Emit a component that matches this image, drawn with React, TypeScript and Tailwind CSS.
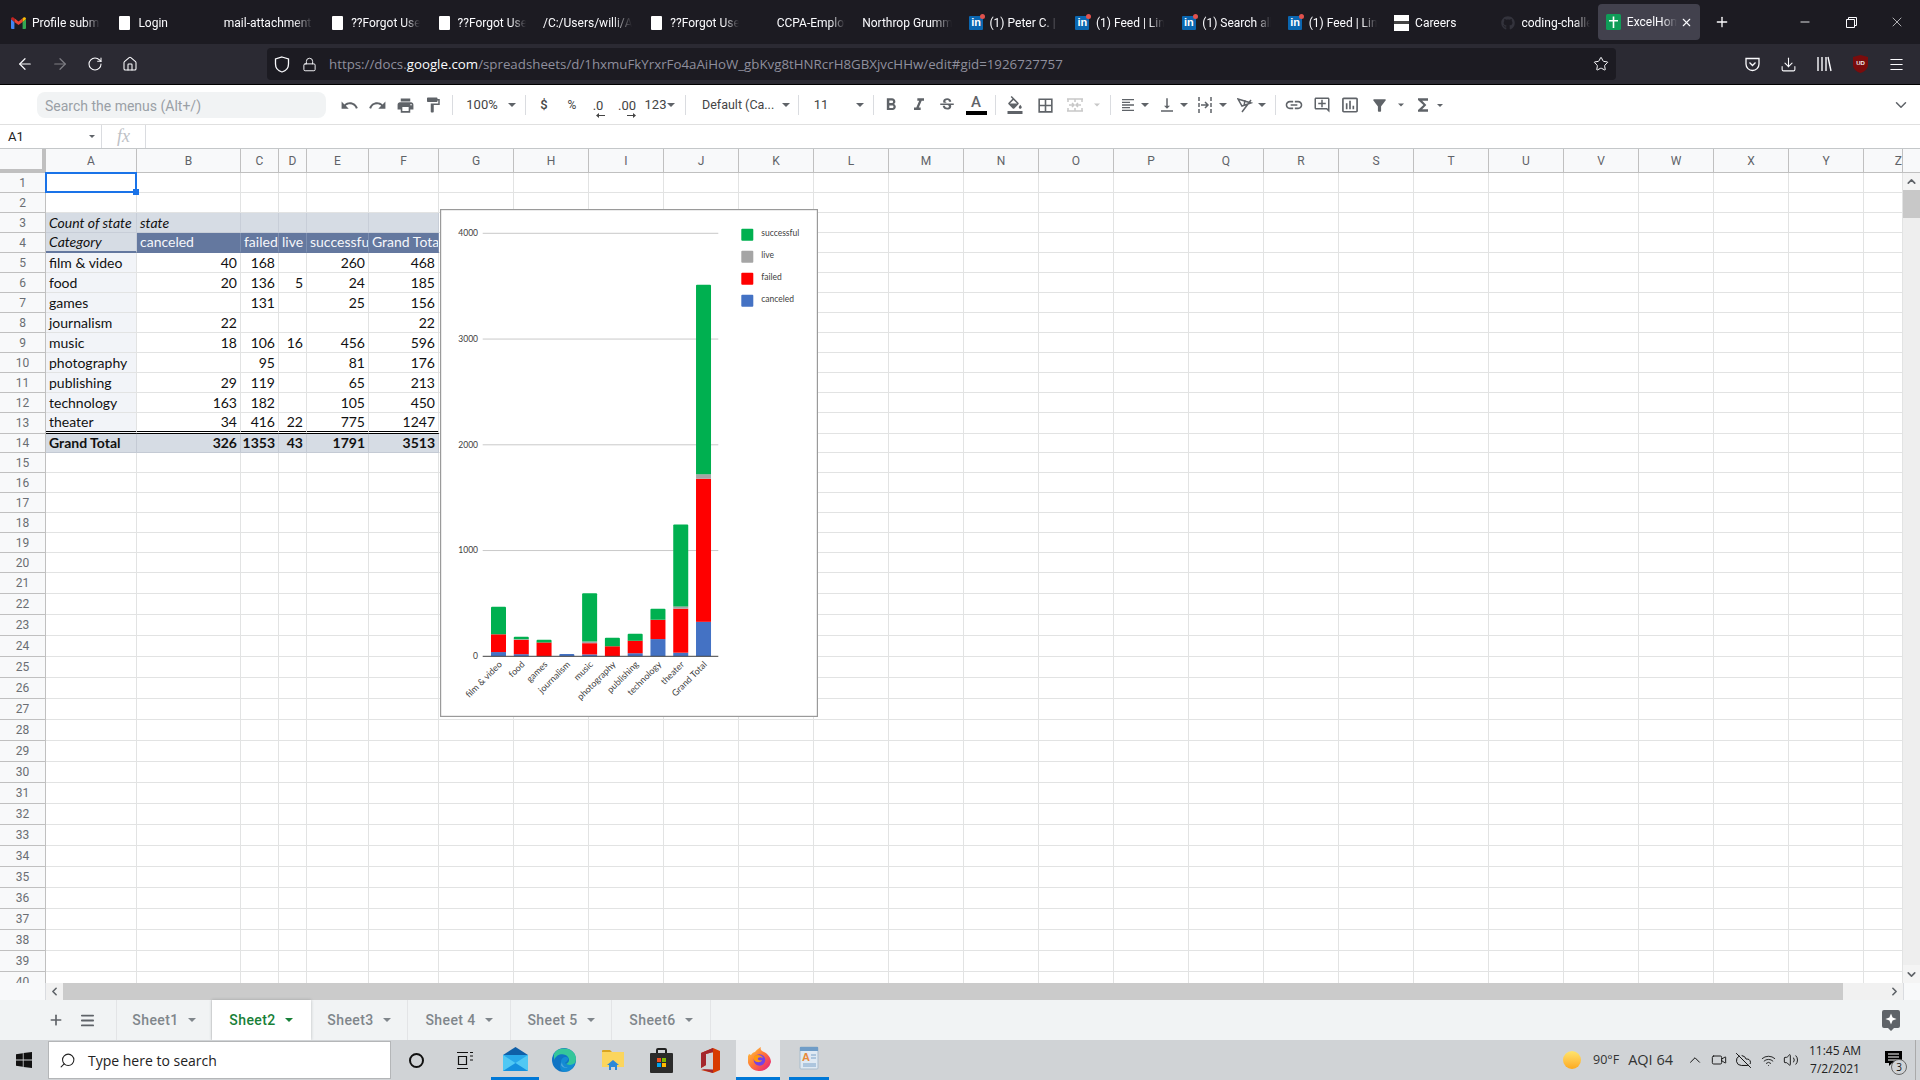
import React from "react";
import { ArrowLeft, ArrowRight, RotateCw, Home, Lock, Star, Download, Menu, Plus, X, Minus, ChevronUp, ChevronDown, ChevronLeft, ChevronRight, Video, CloudOff, Wifi, Volume2, Search } from "lucide-react";
import { MdUndo, MdRedo, MdPrint, MdFormatPaint, MdFormatBold, MdFormatItalic, MdStrikethroughS, MdFormatColorFill, MdBorderAll, MdFormatAlignLeft, MdVerticalAlignBottom, MdLink, MdOutlineAddComment, MdInsertChartOutlined, MdFunctions, MdFilterAlt } from "react-icons/md";
import { FaGithub } from "react-icons/fa";

const Caret = ({ c = "#5f6368", s = 8 }: { c?: string; s?: number }) => (
  <svg width={s} height={s / 2} viewBox="0 0 8 4"><path d="M0 0h8L4 4z" fill={c} /></svg>
);

const S = ({ c, children }: { c: string; children?: React.ReactNode }) => (
  <div className={`flex items-center justify-center shrink-0 h-full ${c}`}>{children}</div>
);

const Sep = ({ c }: { c: string }) => (
  <div className={`flex items-center justify-center shrink-0 h-full ${c}`}><div className="w-px h-[20px] bg-[#dadce0]" /></div>
);

const Gmail = () => (
  <svg width="15" height="12" viewBox="0 0 15 12">
    <path d="M0 2v9a1 1 0 0 0 1 1h2.4V5L0 2z" fill="#4285f4" />
    <path d="M15 2v9a1 1 0 0 1-1 1h-2.4V5L15 2z" fill="#34a853" />
    <path d="M3.4 5V1.2L7.5 4.4l4.1-3.2V5L7.5 8z" fill="#ea4335" />
    <path d="M0 2c0-1.6 2-2.4 3.4-.8V5z" fill="#c5221f" />
    <path d="M15 2c0-1.6-2-2.4-3.4-.8V5z" fill="#fbbc04" />
  </svg>
);
const WhiteDoc = () => <div className="w-[11px] h-[14px] bg-white rounded-[1px]" />;
const LinkedIn = () => (
  <div className="relative w-[14px] h-[14px] bg-[#0a66b0] rounded-[1px] flex items-center justify-center text-white font-bold text-[11px] leading-none font-['Liberation_Sans',sans-serif]">
    in
    <div className="absolute -top-[2px] -right-[2px] w-[5px] h-[5px] rounded-full bg-[#e0524d]" />
  </div>
);
const Careers = () => (
  <div className="w-[16px] h-[16px] bg-white flex items-center"><div className="w-full h-[3px] bg-[#444]" /></div>
);
const SheetsIcon = () => (
  <svg width="15" height="16" viewBox="0 0 15 16"><rect width="15" height="16" rx="1.5" fill="#0f9d58" /><path d="M6.700 2.500h1.600V6H12v1.600H8.300V14H6.700V7.600H3V6h3.700z" fill="#fff" /></svg>
);

const tabs: { t: string; i?: React.ReactNode; none?: boolean }[] = [
  { t: "Profile submission", i: <Gmail /> },
  { t: "Login", i: <WhiteDoc /> },
  { t: "mail-attachment", none: true },
  { t: "??Forgot Username", i: <WhiteDoc /> },
  { t: "??Forgot Username", i: <WhiteDoc /> },
  { t: "/C:/Users/willi/App", none: true },
  { t: "??Forgot Username", i: <WhiteDoc /> },
  { t: "CCPA-Employee" },
  { t: "Northrop Grumman", none: true },
  { t: "(1) Peter C. | Linked", i: <LinkedIn /> },
  { t: "(1) Feed | LinkedIn", i: <LinkedIn /> },
  { t: "(1) Search all", i: <LinkedIn /> },
  { t: "(1) Feed | LinkedIn", i: <LinkedIn /> },
  { t: "Careers", i: <Careers /> },
  { t: "coding-challenge", i: <FaGithub size={14} color="#33333c" /> },
];

const cols = ["A","B","C","D","E","F","G","H","I","J","K","L","M","N","O","P","Q","R","S","T","U","V","W","X","Y","Z"];

const data: Record<number, string[]> = {
  3: ["Count of state", "state", "", "", "", ""],
  4: ["Category", "canceled", "failed", "live", "successful", "Grand Total"],
  5: ["film & video", "40", "168", "", "260", "468"],
  6: ["food", "20", "136", "5", "24", "185"],
  7: ["games", "", "131", "", "25", "156"],
  8: ["journalism", "22", "", "", "", "22"],
  9: ["music", "18", "106", "16", "456", "596"],
  10: ["photography", "", "95", "", "81", "176"],
  11: ["publishing", "29", "119", "", "65", "213"],
  12: ["technology", "163", "182", "", "105", "450"],
  13: ["theater", "34", "416", "22", "775", "1247"],
  14: ["Grand Total", "326", "1353", "43", "1791", "3513"],
};

function cellClass(r: number, c: number) {
  const base = "overflow-hidden whitespace-nowrap flex items-center text-[14px] leading-none text-[#111] font-['Lato',sans-serif] px-[3px] border-r ";
  if (r === 3) return base + "pt-[1px] bg-[#d6dce4] border-b border-[#c8ced8] italic " + (c > 1 ? "justify-end" : "");
  if (r === 4) {
    if (c === 0) return base + "bg-[#d6dce4] border-r-[#c8ced8] italic border-b-2 border-b-[#64789f]";
    return base + "bg-[#64789f] border-[#7c8eb0] border-b-2 border-b-[#64789f] !text-[#f4f6fa]";
  }
  if (r === 13) return base + "border-r-[#e2e3e3] border-b-[3px] border-b-black border-double [border-right-style:solid] " + (c === 0 ? "bg-[#f2f4f8]" : "bg-white justify-end");
  if (r === 14) return base + "bg-[#d6dce4] border-b border-[#c4cad4] font-bold " + (c === 0 ? "" : "justify-end");
  return base + "pt-[1px] border-b border-[#e2e3e3] " + (c === 0 ? "bg-[#f2f4f8]" : "bg-white justify-end");
}

const Grid = () => {
  const rowNums = Array.from({ length: 40 }, (_, i) => i + 1);
  return (
    <div className="grid w-[1903px] h-[834px] overflow-hidden bg-white font-[Roboto,sans-serif] grid-cols-[46px_91px_104px_38px_28px_62px_70px_repeat(19,75px)_39px] grid-rows-[24px_repeat(12,20px)_21px_19px_repeat(6,20px)_repeat(20,21px)]">
      <div className="bg-[#f8f9fa] border-r-[4px] border-b-[4px] border-[#c0c0c0]" />
      {cols.map((l, i) => (
        <div key={l} className={`bg-[#f8f9fa] border-r border-b border-[#c0c0c0] flex items-center text-[12px] text-[#5f6368] overflow-hidden ${i === 25 ? "justify-end" : "justify-center"}`}>{l}</div>
      ))}
      {rowNums.map((r) => (
        <React.Fragment key={r}>
          <div className="bg-[#f8f9fa] border-r border-b border-[#c0c0c0] flex items-center justify-center text-[12px] text-[#6a6e73]">{r}</div>
          {cols.map((l, c) =>
            data[r] && c < 6 ? (
              <div key={l} className={cellClass(r, c)}>{data[r][c]}</div>
            ) : (
              <div key={l} className="bg-white border-r border-b border-[#e2e3e3]" />
            )
          )}
        </React.Fragment>
      ))}
    </div>
  );
};

const chartData = [
  ["film & video", 40, 168, 0, 260],
  ["food", 20, 136, 5, 24],
  ["games", 0, 131, 0, 25],
  ["journalism", 22, 0, 0, 0],
  ["music", 18, 106, 16, 456],
  ["photography", 0, 95, 0, 81],
  ["publishing", 29, 119, 0, 65],
  ["technology", 163, 182, 0, 105],
  ["theater", 34, 416, 22, 775],
  ["Grand Total", 326, 1353, 43, 1791],
] as [string, number, number, number, number][];
const seriesColors = ["#4472c4", "#ff0000", "#a5a5a5", "#00b050"];

const Chart = () => {
  const y0 = 656.3;
  const k = 0.10575;
  return (
    <div className="absolute left-[440px] top-[60px] w-[378px] h-[508px] bg-white">
      <svg viewBox="440 209 378 508" className="block w-full h-full">
        <rect x="440.5" y="209.5" width="377" height="507" fill="#fff" stroke="#9a9a9a" strokeWidth="1.4" />
        {[1000, 2000, 3000, 4000].map((v) => (
          <g key={v}>
            <line x1="482.7" x2="718.3" y1={y0 - v * k} y2={y0 - v * k} stroke="#c9c9c9" strokeWidth="1" />
            <text x="478" y={y0 - v * k + 2.8} textAnchor="end" fontSize="8.500" fill="#404040" fontFamily="Lato, sans-serif">{v}</text>
          </g>
        ))}
        <text x="478" y={y0 + 2.8} textAnchor="end" fontSize="8.500" fill="#404040" fontFamily="Lato, sans-serif">0</text>
        {chartData.map((d, i) => {
          const x = 491 + i * 22.78;
          let acc = 0;
          const total = d[1] + d[2] + d[3] + d[4];
          return (
            <g key={d[0]}>
              {[d[1], d[2], d[3], d[4]].map((v, s) => {
                if (!v) return null;
                const top = y0 - (acc + v) * k;
                const h = v * k;
                acc += v;
                const last = acc === total;
                return last ? (
                  <path key={s} d={`M${x} ${top + h}V${top + 1}q0-1 1-1h13q1 0 1 1V${top + h}z`} fill={seriesColors[s]} />
                ) : (
                  <rect key={s} x={x} y={top} width="15" height={h} fill={seriesColors[s]} />
                );
              })}
              <text transform={`translate(${x + 11.5} 665) rotate(-45)`} textAnchor="end" fontSize="9" fill="#404040" fontFamily="Lato, sans-serif">{d[0]}</text>
            </g>
          );
        })}
        <line x1="482.7" x2="718.3" y1={y0} y2={y0} stroke="#404040" strokeWidth="1" />
        {[["successful", "#00b050", 228.7], ["live", "#a5a5a5", 250.7], ["failed", "#ff0000", 272.7], ["canceled", "#4472c4", 294.7]].map(([t, c, y]) => (
          <g key={t as string}>
            <rect x="741.3" y={y as number} width="12" height="12" rx="1" fill={c as string} />
            <text x="761.3" y={(y as number) + 7} fontSize="8.500" fill="#404040" fontFamily="Lato, sans-serif">{t}</text>
          </g>
        ))}
      </svg>
    </div>
  );
};

const Grey = "#5f6368";

const Decimal = ({ t, dir }: { t: string; dir: "l" | "r" }) => (
  <div className="relative text-[13px] leading-none text-[#444] font-[Roboto,sans-serif]">
    {t}
    <svg width="9" height="5" viewBox="0 0 9 5" className={`absolute -bottom-[6px] ${dir === "l" ? "left-[3px]" : "right-0"}`}>
      {dir === "l" ? <path d="M0 2.5L3 0v2h6v1H3v2z" fill="#444" /> : <path d="M9 2.5L6 0v2H0v1h6v2z" fill="#444" />}
    </svg>
  </div>
);

const Toolbar = () => (
  <div className="h-[40px] shrink-0 flex items-center pl-[37px] pt-[1px] bg-white border-b border-[#e0e0e0] text-[13px] text-[#444] font-[Roboto,sans-serif]">
    <div className="w-[289px] h-[26px] shrink-0 rounded-[8px] bg-[#f1f3f4] flex items-center pl-[8px] pt-[2px] text-[14px] text-[#9aa0a6]">Search the menus (Alt+/)</div>
    <div className="ml-[9px] flex items-center h-full">
      <S c="w-[28px]"><MdUndo size={19} color={Grey} /></S>
      <S c="w-[28px]"><MdRedo size={19} color={Grey} /></S>
      <S c="w-[28px]"><MdPrint size={19} color={Grey} /></S>
      <S c="w-[28px]"><MdFormatPaint size={18} color={Grey} /></S>
      <Sep c="w-[11px]" />
      <S c="w-[48px]">100%</S>
      <S c="w-[12px]"><Caret /></S>
      <Sep c="w-[14px]" />
      <S c="w-[24px]"><span className="font-medium">$</span></S>
      <S c="w-[32px]"><span className="text-[12px]">%</span></S>
      <S c="w-[20px]"><Decimal t=".0" dir="l" /></S>
      <S c="w-[38px]"><Decimal t=".00" dir="r" /></S>
      <S c="w-[19px]">123</S>
      <S c="w-[12px]"><Caret /></S>
      <Sep c="w-[16px]" />
      <div className="ml-[9px] w-[69px] whitespace-nowrap text-[12.5px]">Default (Ca...</div>
      <S c="w-[12px] ml-[9px]"><Caret /></S>
      <Sep c="w-[12px]" />
      <S c="w-[20px] ml-[7px]">11</S>
      <S c="w-[12px] ml-[23px]"><Caret /></S>
      <Sep c="w-[14px]" />
      <S c="w-[22px]"><MdFormatBold size={20} color={Grey} /></S>
      <S c="w-[34px]"><MdFormatItalic size={20} color={Grey} /></S>
      <S c="w-[22px]"><MdStrikethroughS size={18} color={Grey} /></S>
      <S c="w-[36px]">
        <div className="flex flex-col items-center">
          <span className="text-[15px] leading-[15px] text-[#5f6368] font-medium">A</span>
          <div className="w-[21px] h-[4px] bg-black mt-[1px]" />
        </div>
      </S>
      <Sep c="w-[2px]" />
      <S c="w-[38px]"><MdFormatColorFill size={18} color={Grey} /></S>
      <S c="w-[22px]"><MdBorderAll size={19} color={Grey} /></S>
      <S c="w-[38px]">
        <svg width="16" height="14" viewBox="0 0 16 14" fill="none" stroke="#c8c8c8" strokeWidth="1.5">
          <path d="M0 1h16M0 13h16M1 1v3M15 1v3M1 10v3M15 10v3M2 7h4M14 7h-4M5 5l2 2-2 2M11 5l-2 2 2 2M8 1v3M8 10v3" />
        </svg>
      </S>
      <S c="w-[6px]"><Caret c="#c8c8c8" /></S>
      <Sep c="w-[20px]" />
      <S c="w-[16px]"><MdFormatAlignLeft size={20} color={Grey} /></S>
      <S c="w-[18px]"><Caret /></S>
      <S c="w-[26px]"><MdVerticalAlignBottom size={18} color={Grey} /></S>
      <S c="w-[8px]"><Caret /></S>
      <S c="w-[23px] ml-[6px]">
        <svg width="15" height="16" viewBox="0 0 15 16" fill="none" stroke="#5f6368" strokeWidth="1.5">
          <path d="M1 0v4M1 6v4M1 12v4M13 0v4M13 6v4M13 12v4M3 8h7M7 5l3 3-3 3" />
        </svg>
      </S>
      <S c="w-[12px]"><Caret /></S>
      <S c="w-[24px] ml-[4px]">
        <svg width="16" height="16" viewBox="0 0 16 16" fill="none" stroke="#5f6368" strokeWidth="1.5">
          <path d="M1 2l13 4-9 3zM8 3l-1 6M14 3L5 15" />
        </svg>
      </S>
      <S c="w-[10px]"><Caret /></S>
      <Sep c="w-[17px]" />
      <S c="w-[20px]"><MdLink size={20} color={Grey} /></S>
      <S c="w-[36px]"><MdOutlineAddComment size={18} color={Grey} /></S>
      <S c="w-[20px]"><MdInsertChartOutlined size={20} color={Grey} /></S>
      <S c="w-[38px]"><MdFilterAlt size={19} color={Grey} /></S>
      <S c="w-[6px]"><Caret /></S>
      <S c="w-[22px] ml-[8px]"><MdFunctions size={20} color={Grey} /></S>
      <S c="w-[12px]"><Caret s={6} /></S>
    </div>
    <div className="ml-auto pr-[10px]"><ChevronDown size={18} color="#5f6368" strokeWidth={2} /></div>
  </div>
);

const Windows = () => (
  <svg width="16" height="16" viewBox="0 0 16 16" fill="#111"><path d="M0 2.2l6.8-1v6.3H0zM7.6 1.1L16 0v7.5H7.6zM0 8.4h6.8v6.4L0 13.8zM7.6 8.4H16V16l-8.4-1.1z" /></svg>
);
const MailIcon = () => (
  <svg width="25" height="24" viewBox="0 0 25 24">
    <path d="M0 8L12.5 0 25 8v2H0z" fill="#0f5fa8" />
    <rect y="8" width="25" height="16" fill="#28a8ea" />
    <path d="M0 8l12.5 8L25 8v16H0z" fill="#50c8f4" />
    <path d="M0 24l12.5-8L25 24z" fill="#1490df" />
  </svg>
);
const EdgeIcon = () => (
  <svg width="24" height="24" viewBox="0 0 24 24">
    <circle cx="12" cy="12" r="12" fill="#0f74c4" />
    <path d="M2 6C5 0 14-1 20 3c4 3 5 8 3 12-2 2-6 3-9 1 3-1 4-4 2-7C13 5 5 5 2 12z" fill="#35c69a" />
    <path d="M9 14c0-3 2-5 5-5 2 0 2.5 1.5 2 2.500-1 2-2 2.500-3 3.500 2 3 7 2 10 0-1 5-6 9-11 9-3-1-5-4-3-10z" fill="#1a9fe0" opacity=".55" />
    <path d="M10 14c0 4 3 6 6 5-3 2-6 0-7-2z" fill="#fff" opacity=".25" />
  </svg>
);
const FolderIcon = () => (
  <svg width="22" height="20" viewBox="0 0 22 20">
    <path d="M0 1a1 1 0 0 1 1-1h7l2 2H0z" fill="#d9a520" />
    <rect y="2" width="22" height="15" fill="#fbd55d" />
    <path d="M7 20v-5h-2l6-5 6 5h-2v5h-2v-3H9v3z" fill="#2b88d8" />
  </svg>
);
const StoreIcon = () => (
  <svg width="23" height="25" viewBox="0 0 23 25">
    <path d="M7 6V2a1 1 0 0 1 1-1h7a1 1 0 0 1 1 1v4" fill="none" stroke="#222" strokeWidth="2" />
    <rect y="5" width="23" height="20" rx="1" fill="#2b2b2b" />
    <rect x="7" y="10" width="4" height="4" fill="#f25022" />
    <rect x="12" y="10" width="4" height="4" fill="#7fba00" />
    <rect x="7" y="15" width="4" height="4" fill="#00a4ef" />
    <rect x="12" y="15" width="4" height="4" fill="#ffb900" />
  </svg>
);
const OfficeIcon = () => (
  <svg width="19" height="25" viewBox="0 0 19 25">
    <path d="M12 0l7 3v19l-7 3-12-3 12 0V4L5 6v11l-5 3V5z" fill="#d83b01" />
    <path d="M12 0v25L0 21l12 .5V4L5 6v11l-5 3V5z" fill="#a4262c" />
  </svg>
);
const FirefoxIcon = () => (
  <svg width="23" height="24" viewBox="0 0 23 24">
    <defs>
      <linearGradient id="ff" x1="0" y1="0" x2="1" y2="1"><stop offset="0" stopColor="#ffd13c" /><stop offset=".5" stopColor="#ff7139" /><stop offset="1" stopColor="#e31587" /></linearGradient>
    </defs>
    <path d="M11.500 24A11.500 11.500 0 0 1 1 7l2 1c1-2 3-3 4-3 0 0 2-3 6-5-1 2 0 4 3 5 4 2 7 6 7 10A11.500 11.500 0 0 1 11.500 24z" fill="url(#ff)" />
    <circle cx="11.500" cy="13" r="5.800" fill="#7542e5" />
    <path d="M6 9c3-2 8-1 9 2-2-1-4-1-5 0-1 2 2 3 4 2-1 3-6 3-8 0z" fill="#ff980e" />
  </svg>
);
const WordPadIcon = () => (
  <svg width="20" height="26" viewBox="0 0 20 26">
    <rect x="1" y="1" width="18" height="22" rx="1" fill="#dfe9f3" stroke="#a9bccd" />
    <rect x="1" y="1" width="18" height="4" fill="#6f9cc7" />
    <text x="3" y="15" fontSize="11" fontWeight="700" fill="#e8893a" fontFamily="Liberation Sans, sans-serif">A</text>
    <path d="M12 9h5M12 12h5M4 18h13M4 20h13" stroke="#7ba2c9" strokeWidth="1" />
  </svg>
);

const SheetTab = ({ c, t, active }: { c: string; t: string; active?: boolean }) => (
  <div className={`h-full flex items-center justify-center gap-[9px] text-[14px] tracking-[0.4px] font-medium border-r ${c} ${active ? "bg-white text-[#188038] border-transparent shadow-[0_0_3px_rgba(60,64,67,0.3)]" : "text-[#80868b] border-[#e3e4e6]"}`}>
    {t}
    <Caret c={active ? "#188038" : "#80868b"} />
  </div>
);

export default function App() {
  return (
    <div className="w-[1920px] h-[1080px] overflow-hidden flex flex-col bg-white font-[Roboto,sans-serif]">
      {/* Browser tabs */}
      <div className="h-[44px] shrink-0 bg-[#1c1b22] flex items-center pl-[4px] text-[12px] text-[#fbfbfe] font-[Roboto,sans-serif]">
        {tabs.map((x, i) => (
          <div key={i} className="w-[106.4px] shrink-0 flex items-center pl-[7px] pt-[1px]">
            {!x.none && <div className="w-[15px] mr-[6px] flex items-center justify-center shrink-0">{x.i}</div>}
            <div className="min-w-0 flex-1 mr-[10px] overflow-hidden whitespace-nowrap [mask-image:linear-gradient(to_right,black_78%,transparent)]">{x.t}</div>
          </div>
        ))}
        <div className="w-[102px] h-[36px] shrink-0 -ml-[2px] rounded-[4px] bg-[#42414d] flex items-center pl-[8px]">
          <SheetsIcon />
          <div className="ml-[6px] w-[50px] overflow-hidden whitespace-nowrap [mask-image:linear-gradient(to_right,black_70%,transparent)]">ExcelHomework</div>
          <X size={13} className="ml-[3px]" />
        </div>
        <Plus size={16} className="ml-[14px]" />
        <div className="ml-auto flex items-center h-full">
          <S c="w-[46px]"><Minus size={14} strokeWidth={1.5} /></S>
          <S c="w-[46px]">
            <svg width="11" height="11" viewBox="0 0 11 11" fill="none" stroke="#fbfbfe"><path d="M.5 2.500h8v8h-8zM2.500 2.500v-2h8v8h-2" /></svg>
          </S>
          <S c="w-[46px]"><X size={16} strokeWidth={1} /></S>
        </div>
      </div>
      {/* Address bar */}
      <div className="h-[41px] shrink-0 bg-[#2b2a33] border-b border-black flex items-center pl-[7px] text-[#fbfbfe]">
        <S c="w-[35px]"><ArrowLeft size={18} strokeWidth={1.6} /></S>
        <S c="w-[35px]"><ArrowRight size={18} strokeWidth={1.6} className="opacity-40" /></S>
        <S c="w-[35px]"><RotateCw size={16} strokeWidth={1.6} /></S>
        <S c="w-[35px]"><Home size={16} strokeWidth={1.6} /></S>
        <div className="ml-[120px] w-[1349px] h-[32px] shrink-0 rounded-[4px] bg-[#1c1b22] flex items-center pl-[7px] pr-[7px]">
          <svg width="16" height="17" viewBox="0 0 16 17" fill="none" stroke="#fbfbfe" strokeWidth="1.3"><path d="M8 1l6.500 2v5c0 4-3 7-6.500 8-3.500-1-6.500-4-6.500-8V3z" /></svg>
          <Lock size={15} strokeWidth={1.5} className="ml-[12px]" />
          <div className="ml-[12px] pt-[1px] text-[13.3px] font-['Open_Sans',sans-serif] text-[#8f8f9d] whitespace-nowrap">
            https://docs.<span className="text-[#fbfbfe]">google.com</span>/spreadsheets/d/1hxmuFkYrxrFo4aAiHoW_gbKvg8tHNRcrH8GBXjvcHHw/edit#gid=1926727757
          </div>
          <Star size={16} strokeWidth={1.5} className="ml-auto" />
        </div>
        <div className="ml-[118px] flex items-center h-full">
          <S c="w-[36px]">
            <svg width="15" height="15" viewBox="0 0 15 15" fill="none" stroke="#fbfbfe" strokeWidth="1.3"><path d="M1 1.500h13V7a6.500 6.500 0 0 1-13 0z" /><path d="M4.500 5.500l3 3 3-3" /></svg>
          </S>
          <S c="w-[36px]"><Download size={17} strokeWidth={1.5} /></S>
          <S c="w-[36px]">
            <svg width="16" height="16" viewBox="0 0 16 16" fill="none" stroke="#fbfbfe" strokeWidth="1.4"><path d="M2 1v14M6 1v14M10 1v14M12 1l3 14" /></svg>
          </S>
          <S c="w-[36px]">
            <svg width="15" height="18" viewBox="0 0 15 18"><path d="M7.500 0L15 2v8c0 4-4 7-7.500 8C4 17 0 14 0 10V2z" fill="#7a0c0c" /><text x="7.500" y="10" fontSize="6" fontWeight="700" fill="#eee" textAnchor="middle" fontFamily="Liberation Sans, sans-serif">UD</text></svg>
          </S>
          <S c="w-[36px]"><Menu size={17} strokeWidth={1.5} /></S>
        </div>
      </div>
      <Toolbar />
      {/* Formula bar */}
      <div className="h-[24px] shrink-0 flex items-center border-b border-[#c4c7c9] bg-white">
        <div className="w-[102px] h-full flex items-center pl-[8px] border-r border-[#dadce0] text-[13px] text-[#222]">
          A1
          <div className="ml-auto mr-[6px]"><Caret s={6} /></div>
        </div>
        <div className="w-[44px] h-full flex items-center justify-center border-r border-[#dadce0] text-[#bdc1c6] italic text-[18px] font-['Liberation_Serif',serif]">fx</div>
      </div>
      {/* Grid */}
      <div className="h-[834px] shrink-0 flex relative overflow-hidden">
        <Grid />
        <div className="absolute left-[45px] top-[23px] w-[92px] h-[21px] border-2 border-[#1a73e8]" />
        <div className="absolute left-[133px] top-[40px] w-[6px] h-[6px] bg-[#1a73e8]" />
        <Chart />
        <div className="w-[17px] shrink-0 flex flex-col bg-[#eeeeee]">
          <div className="h-[24px] bg-[#f8f9fa] border-b border-[#c0c0c0]" />
          <div className="h-[17px] flex items-center justify-center bg-[#f4f4f4]"><ChevronUp size={13} strokeWidth={3} color="#5f6368" /></div>
          <div className="h-[28px] bg-[#c8c8c8]" />
          <div className="flex-1" />
          <div className="h-[18px] flex items-center justify-center bg-[#f4f4f4]"><ChevronDown size={13} strokeWidth={3} color="#5f6368" /></div>
        </div>
      </div>
      {/* Horizontal scrollbar */}
      <div className="h-[17px] shrink-0 flex bg-[#f8f9fa]">
        <div className="w-[46px] border-r border-[#dadce0]" />
        <div className="w-[17px] bg-[#f1f1f1] flex items-center justify-center"><ChevronLeft size={13} strokeWidth={3} color="#5f6368" /></div>
        <div className="w-[1780px] bg-[#cbcbcb]" />
        <div className="w-[60px] bg-[#f1f1f1] flex items-center justify-end pr-[2px]"><ChevronRight size={13} strokeWidth={3} color="#5f6368" /></div>
        <div className="flex-1 border-l border-[#dadce0]" />
      </div>
      {/* Sheet tabs */}
      <div className="h-[40px] shrink-0 bg-[#f1f3f4] flex items-center">
        <S c="w-[32px] ml-[40px]"><Plus size={16} strokeWidth={2.5} color="#5f6368" /></S>
        <S c="w-[30px]"><Menu size={17} strokeWidth={2.5} color="#5f6368" /></S>
        <div className="ml-[14px] h-full flex border-l border-[#e3e4e6]">
          <SheetTab c="w-[95px]" t="Sheet1" />
          <SheetTab c="w-[99px]" t="Sheet2" active />
          <SheetTab c="w-[97px]" t="Sheet3" />
          <SheetTab c="w-[103px]" t="Sheet 4" />
          <SheetTab c="w-[101px]" t="Sheet 5" />
          <SheetTab c="w-[99px]" t="Sheet6" />
        </div>
        <div className="ml-auto mr-[20px]">
          <svg width="18" height="21" viewBox="0 0 18 21">
            <path d="M2 0h14a2 2 0 0 1 2 2v14a2 2 0 0 1-2 2h-4l-3 3-3-3H2a2 2 0 0 1-2-2V2a2 2 0 0 1 2-2z" fill="#5f6368" />
            <path d="M9 3.500l1.600 4 4 1.500-4 1.500-1.600 4-1.600-4-4-1.500 4-1.500z" fill="#fff" />
          </svg>
        </div>
      </div>
      {/* Taskbar */}
      <div className="h-[40px] shrink-0 bg-[#d0d3d6] flex items-stretch text-[#111] font-['Open_Sans',sans-serif]">
        <S c="w-[48px]"><Windows /></S>
        <div className="w-[343px] my-[1px] bg-white border border-[#b4b6b8] flex items-center pl-[10px] text-[14px] text-[#222]">
          <Search size={17} strokeWidth={1.5} className="-scale-x-100" />
          <span className="ml-[12px]">Type here to search</span>
        </div>
        <S c="w-[50px]"><div className="w-[15px] h-[15px] rounded-full border-2 border-[#111]" /></S>
        <S c="w-[46px]">
          <svg width="17" height="17" viewBox="0 0 17 17" fill="none" stroke="#111" strokeWidth="1.2"><path d="M1 .5h11M1 16.500h11M2.500 4.500h8v8h-8zM14 .5h3M14 4h3M14 8h3" /></svg>
        </S>
        <S c="w-[48px] ml-[4px] border-b-[3px] border-[#0078d7]"><MailIcon /></S>
        <S c="w-[49px]"><EdgeIcon /></S>
        <S c="w-[49px]"><FolderIcon /></S>
        <S c="w-[49px]"><StoreIcon /></S>
        <S c="w-[49px]"><OfficeIcon /></S>
        <S c="w-[44px] ml-[1px] pl-[3px] bg-[#eceef0] border-b-[3px] border-[#0078d7]"><FirefoxIcon /></S>
        <S c="w-[40px] ml-[9px] border-b-[3px] border-[#0078d7]"><WordPadIcon /></S>
        <div className="ml-auto flex items-center">
          <div className="w-[18px] h-[18px] rounded-full bg-gradient-to-b from-[#ffe46b] to-[#fca91a]" />
          <span className="ml-[12px] text-[12.5px] text-[#333]">90°F</span>
          <span className="ml-[9px] text-[14.5px] text-[#333]">AQI 64</span>
          <ChevronUp size={18} strokeWidth={1.3} className="ml-[13px]" />
          <Video size={16} strokeWidth={1.4} className="ml-[7px]" />
          <CloudOff size={17} strokeWidth={1.4} className="ml-[8px]" />
          <Wifi size={15} strokeWidth={1.4} className="ml-[9px]" />
          <Volume2 size={16} strokeWidth={1.4} className="ml-[7px]" />
          <div className="w-[64px] ml-[4px] flex flex-col items-center text-[12px] leading-[18px] text-[#222]">
            <span>11:45 AM</span>
            <span>7/2/2021</span>
          </div>
          <div className="relative w-[40px] ml-[8px] h-[40px] flex items-center justify-center">
            <svg width="17" height="16" viewBox="0 0 17 16" className="-mt-[2px] -ml-[3px]">
              <path d="M0 0h17v12H7l-3 3v-3H0z" fill="#000" />
              <path d="M3 3h11M3 6h11M3 9h11" stroke="#fff" strokeWidth="1" />
            </svg>
            <div className="absolute left-[16px] top-[19px] w-[16px] h-[16px] rounded-full border border-[#666] flex items-center justify-center text-[10px] leading-none bg-[#d0d3d6]">3</div>
          </div>
          <div className="w-[1px] h-full bg-[#aaa]" />
          <div className="w-[4px]" />
        </div>
      </div>
    </div>
  );
}
